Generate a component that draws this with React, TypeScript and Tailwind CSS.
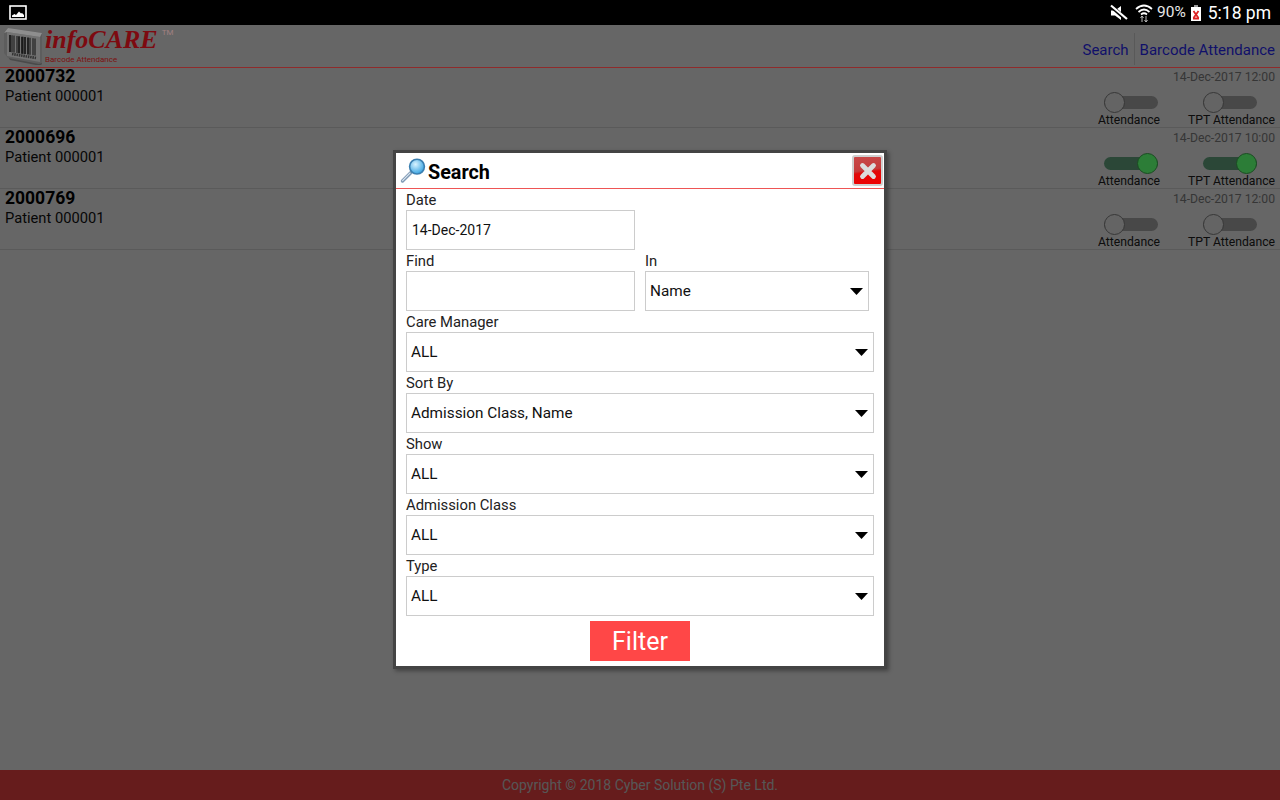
import React from "react";

const font = { fontFamily: "Roboto, sans-serif" };

function PictureIcon() {
  return (
    <svg width="18" height="15" viewBox="0 0 18 15">
      <rect x="1" y="1" width="16" height="13" fill="none" stroke="#fff" strokeWidth="1.6" />
      <path d="M3 12 L3 10.5 L5.5 9 L7 10 L10 6.5 L12 8.5 L13 8 L15 10 L15 12 Z" fill="#fff" />
    </svg>
  );
}

function MuteIcon() {
  return (
    <svg width="18" height="18" viewBox="0 0 18 18">
      <path d="M1 6.5 L5 6.5 L11 2 L11 16 L5 11.5 L1 11.5 Z" fill="#fff" />
      <path d="M1 2 L17 16" stroke="#000" strokeWidth="4" />
      <path d="M1 1.5 L17 15" stroke="#fff" strokeWidth="2.2" />
    </svg>
  );
}

function WifiIcon() {
  return (
    <svg width="18" height="20" viewBox="0 0 18 20" fill="none" stroke="#fff">
      <path d="M1 6 Q9 -1 17 6" strokeWidth="1.7" />
      <path d="M3.5 9 Q9 4 14.5 9" strokeWidth="1.7" />
      <path d="M6 11.5 Q9 9 12 11.5" strokeWidth="1.7" />
      <path d="M7 13 L7 19 M5.5 15 L7 13 L8.5 15 M11 13 L11 19 M9.5 17 L11 19 L12.5 17" strokeWidth="1" stroke="#bbb" />
    </svg>
  );
}

function BatteryIcon() {
  return (
    <svg width="10" height="16" viewBox="0 0 10 16">
      <rect x="3" y="0" width="4" height="2" fill="#999" />
      <rect x="0" y="2" width="10" height="14" fill="#fff" />
      <path d="M2.5 6 L7.5 13 M7.5 6 L2.5 13" stroke="#d22" strokeWidth="1.8" />
      <rect x="2" y="12.5" width="6" height="2" fill="#d22" />
    </svg>
  );
}

function BarcodeLogo() {
  const bars = [0, 2, 4, 7, 9, 12, 13, 15, 18, 20, 23, 25];
  return (
    <svg width="40" height="38" viewBox="0 0 40 38">
      <path d="M0 6 L3 3 L3 28 L6 33 L37 39 L38 36 L3 28" fill="#4a4a4a" />
      <path d="M0 6 L4 1 L38 6 L38 36 L35 37 L4 31 L0 26 Z" fill="#5d5d5d" />
      <path d="M3 5 L36 10 L36 35 L3 29 Z" fill="#737373" />
      <path d="M0 6 L4 1 L38 6 L36 10 L3 5 Z" fill="#8e8e8e" />
      {bars.map((b) => (
        <path
          key={b}
          d={`M${6 + b} ${8 + b * 0.14} L${6 + b} ${25 + b * 0.14}`}
          stroke="#111"
          strokeWidth={b % 3 === 0 ? 1.6 : 1}
        />
      ))}
      <path d="M8 27 L32 31" stroke="#333" strokeWidth="2.6" strokeDasharray="1.5 0.8" />
    </svg>
  );
}

function Toggle({ on }: { on: boolean }) {
  return (
    <div className="relative h-[21px] w-[54px] flex items-center">
      <div className={`h-[13px] w-[54px] rounded-full ${on ? "bg-[#6bb28a]" : "bg-[#b3b3b3]"}`} />
      <div
        className={`absolute top-0 h-[21px] w-[21px] rounded-full border ${
          on ? "right-0 z-20 bg-[#2c7d37] border-[#1a4d22]" : "left-0 bg-[#fafafa] border-[#8a8a8a]"
        }`}
      />
    </div>
  );
}

function Row({ id, date, on }: { id: string; date: string; on: boolean }) {
  return (
    <div className="h-[61px] border-b border-[#e0e0e0] flex justify-between pl-[5px] pr-[5px] shrink-0">
      <div>
        <div className="text-[17.5px] font-bold leading-[18px] text-black">{id}</div>
        <div className="text-[14.7px] leading-[16px] mt-[3px] text-[#111]">Patient 000001</div>
      </div>
      <div className="flex flex-col items-end">
        <div className="text-[12.2px] leading-[14px] mt-[3px] text-[#888]">{date}</div>
        <div className="flex mt-[8px]">
          <div className="flex flex-col items-center w-[62px]">
            <div className="pl-[4px]"><Toggle on={on} /></div>
            <div className="text-[12.2px] leading-[14px] text-[#222] whitespace-nowrap">Attendance</div>
          </div>
          <div className="flex flex-col items-center w-[87px] ml-[28px]">
            <div className="pr-[3px]"><Toggle on={on} /></div>
            <div className="text-[12.2px] leading-[14px] text-[#222] whitespace-nowrap">TPT Attendance</div>
          </div>
        </div>
      </div>
    </div>
  );
}

function Arrow() {
  return (
    <svg width="13" height="7" viewBox="0 0 13 7" className="shrink-0">
      <path d="M0 0 L13 0 L6.5 7 Z" fill="#000" />
    </svg>
  );
}

function SelectBox({ value, className }: { value: string; className: string }) {
  return (
    <div className={`h-10 border border-[#cccccc] flex items-center justify-between pl-1 pr-[5px] text-[15.3px] text-[#111] ${className}`}>
      <span>{value}</span>
      <Arrow />
    </div>
  );
}

function Label({ children }: { children: React.ReactNode }) {
  return <div className="h-[21px] text-[14.8px] leading-[23px] text-[#222]">{children}</div>;
}

function SearchGlass() {
  return (
    <svg width="26" height="26" viewBox="0 0 26 26">
      <defs>
        <radialGradient id="g" cx="0.4" cy="0.35" r="0.7">
          <stop offset="0" stopColor="#d8f3ff" />
          <stop offset="1" stopColor="#2f9fe0" />
        </radialGradient>
      </defs>
      <path d="M2.5 23 L11 14.5" stroke="#7f9ab5" strokeWidth="3.4" strokeLinecap="round" />
      <path d="M2.6 22.6 L10 15.2" stroke="#dfe9f2" strokeWidth="1.1" strokeLinecap="round" />
      <circle cx="17" cy="8.6" r="7.4" fill="url(#g)" stroke="#3b7fb0" strokeWidth="1.6" />
    </svg>
  );
}

function CloseButton() {
  return (
    <div className="h-[31px] w-[31px] rounded-[3px] border-2 border-[#cfcfcf] bg-[linear-gradient(172deg,#c84848_0%,#c43c3c_48%,#e00a0a_56%,#f00000_100%)] flex items-center justify-center">
      <svg width="20" height="20" viewBox="0 0 20 20">
        <path d="M4.5 4.5 L15.5 15.5 M15.5 4.5 L4.5 15.5" stroke="#dcdcdc" strokeWidth="4.8" strokeLinecap="round" />
      </svg>
    </div>
  );
}

export default function App() {
  return (
    <div className="relative h-[800px] w-[1280px] overflow-hidden bg-white flex flex-col" style={font}>
      <div className="h-[25px] bg-black flex items-center justify-between pl-[9px] pr-[9px] text-white relative z-20 shrink-0">
        <PictureIcon />
        <div className="flex items-center">
          <MuteIcon />
          <div className="ml-[7px]"><WifiIcon /></div>
          <span className="text-[15.5px] ml-[4px] text-[#e8e8e8]">90%</span>
          <div className="ml-[5px]"><BatteryIcon /></div>
          <span className="text-[17.5px] ml-[7px] pt-[2px]">5:18 pm</span>
        </div>
      </div>

      <div className="relative z-20 h-[43px] -mb-[1px] bg-[#666666] border-b border-[#8f2b2b] flex justify-between shrink-0">
        <div className="flex pl-[4px] pt-[2px]">
          <BarcodeLogo />
          <div className="ml-[1px]">
            <div className="text-[26px] font-bold italic leading-[26px] text-[#7d0a10]" style={{ fontFamily: '"Liberation Serif", serif' }}>
              infoCARE
            </div>
            <div className="text-[8px] leading-[11px] text-[#7d1010] mt-[1px]">Barcode Attendance</div>
          </div>
          <span className="text-[8px] leading-[9px] mt-[1px] ml-[4px] text-[#a08080]">TM</span>
        </div>
        <div className="flex items-end pb-[3px] text-[15px] text-[#10106a] pr-[5px]">
          <span className="leading-[28px]">Search</span>
          <div className="h-[32px] -mb-[1px] border-l border-[#595959] mx-[5px]" />
          <span className="leading-[28px]">Barcode Attendance</span>
        </div>
      </div>

      <Row id="2000732" date="14-Dec-2017 12:00" on={false} />
      <Row id="2000696" date="14-Dec-2017 10:00" on={true} />
      <Row id="2000769" date="14-Dec-2017 12:00" on={false} />

      <div className="flex-1" />
      <div className="h-[30px] bg-[#ff4747] flex items-center justify-center text-[14px] text-[#d8d8d8] shrink-0">
        Copyright © 2018 Cyber Solution (S) Pte Ltd.
      </div>

      <div className="absolute inset-x-0 bottom-0 top-[25px] bg-black/60 z-10" />

      <div className="absolute left-[393px] top-[150px] z-10 w-[494px] h-[519px] border-[3px] border-[#444444] bg-white shadow-[2px_2px_4px_rgba(0,0,0,0.35)] flex flex-col">
        <div className="h-[36px] border-b border-[#ee5555] flex items-center justify-between pl-[4px] pr-[1px] shrink-0">
          <div className="flex items-center">
            <SearchGlass />
            <span className="text-[19.8px] font-bold text-black ml-[2px] mt-[4px]">Search</span>
          </div>
          <CloseButton />
        </div>
        <div className="pl-[10px] pr-[10px] flex flex-col">
          <Label>Date</Label>
          <div className="h-10 w-[229px] border border-[#cccccc] flex items-center pl-[5px] text-[14px] text-[#111]">14-Dec-2017</div>
          <div className="flex gap-[10px]">
            <div className="w-[229px]">
              <Label>Find</Label>
              <div className="h-10 border border-[#cccccc]" />
            </div>
            <div className="w-[224px]">
              <Label>In</Label>
              <SelectBox value="Name" className="w-[224px]" />
            </div>
          </div>
          <Label>Care Manager</Label>
          <SelectBox value="ALL" className="w-full" />
          <Label>Sort By</Label>
          <SelectBox value="Admission Class, Name" className="w-full" />
          <Label>Show</Label>
          <SelectBox value="ALL" className="w-full" />
          <Label>Admission Class</Label>
          <SelectBox value="ALL" className="w-full" />
          <Label>Type</Label>
          <SelectBox value="ALL" className="w-full" />
          <div className="flex justify-center mt-[5px]">
            <div className="h-10 w-[100px] bg-[#ff4747] text-white text-[25px] pt-[2px] flex items-center justify-center">Filter</div>
          </div>
        </div>
      </div>
    </div>
  );
}
